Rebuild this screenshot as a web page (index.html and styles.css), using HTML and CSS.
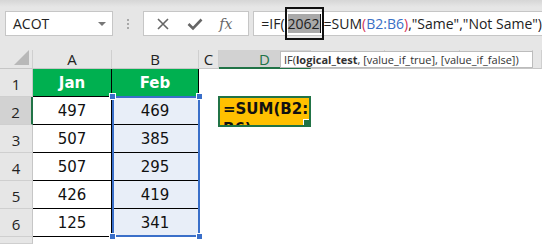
FILE: index.html
```html
<!DOCTYPE html>
<html lang="en">
<head>
    <meta charset="UTF-8">
    <title>IF formula</title>
    <link rel="stylesheet" href="styles.css">
</head>
<body>

<div class="toolbar">
    <div class="name-box">
        <span>ACOT</span>
        <span class="caret"></span>
    </div>
    <div class="grip"><i></i><i></i><i></i></div>
    <div class="fx-box">
        <svg width="14" height="14" viewBox="0 0 14 14"><path d="M2 2 L12 12 M12 2 L2 12" stroke="#666" stroke-width="1.6" fill="none"/></svg>
        <svg width="16" height="14" viewBox="0 0 16 14"><path d="M1.5 7 L6 11.5 L14.5 2.5" stroke="#666" stroke-width="2.6" fill="none"/></svg>
        <span class="fx">fx</span>
    </div>
    <div class="formula-box">
        =IF(<span class="arg"><span class="arg-hl">2062</span></span>=SUM<span class="paren">(</span><span class="ref">B2:B6</span><span class="paren">)</span>,"Same","Not Same")
    </div>
</div>

<div class="sheet">
    <div class="grid">
        <div class="hd corner"><span class="tri"></span></div>
        <div class="hd">A</div>
        <div class="hd">B</div>
        <div class="hd">C</div>
        <div class="hd active-col">D</div>
        <div class="hd"></div>
        <div class="hd"></div>
        <div class="hd"></div>
        <div class="hd"></div>

        <div class="rh">1</div>
        <div class="c tbl head">Jan</div>
        <div class="c tbl head">Feb</div>
        <div class="c"></div><div class="c"></div><div class="c"></div><div class="c"></div><div class="c"></div><div class="c"></div>

        <div class="rh active-row">2</div>
        <div class="c tbl">497</div>
        <div class="c tbl sel">469</div>
        <div class="c"></div><div class="c"></div><div class="c"></div><div class="c"></div><div class="c"></div><div class="c"></div>

        <div class="rh">3</div>
        <div class="c tbl">507</div>
        <div class="c tbl sel">385</div>
        <div class="c"></div><div class="c"></div><div class="c"></div><div class="c"></div><div class="c"></div><div class="c"></div>

        <div class="rh">4</div>
        <div class="c tbl">507</div>
        <div class="c tbl sel">295</div>
        <div class="c"></div><div class="c"></div><div class="c"></div><div class="c"></div><div class="c"></div><div class="c"></div>

        <div class="rh">5</div>
        <div class="c tbl">426</div>
        <div class="c tbl sel">419</div>
        <div class="c"></div><div class="c"></div><div class="c"></div><div class="c"></div><div class="c"></div><div class="c"></div>

        <div class="rh">6</div>
        <div class="c tbl">125</div>
        <div class="c tbl sel">341</div>
        <div class="c"></div><div class="c"></div><div class="c"></div><div class="c"></div><div class="c"></div><div class="c"></div>

        <div class="rh"></div>
        <div class="c"></div><div class="c"></div><div class="c"></div><div class="c"></div><div class="c"></div><div class="c"></div><div class="c"></div><div class="c"></div>
    </div>

    <!-- selection B2:B6 -->
    <div class="selection">
        <span class="handle tl"></span>
        <span class="handle tr"></span>
        <span class="handle bl"></span>
        <span class="handle br"></span>
    </div>

    <!-- in-cell editor on D2 -->
    <div class="editor">
        <div class="editor-text">=SUM(B2:<br>B6)</div>
        <span class="fill-handle"></span>
    </div>

    <div class="tooltip">IF(<b>logical_test</b>, [value_if_true], [value_if_false])</div>
</div>

</body>
</html>
```

FILE: styles.css
```css
body {
    margin: 0;
    padding: 0;
    width: 542px;
    height: 244px;
    overflow: hidden;
    background-color: #fff;
    font-family: "Open Sans", "Liberation Sans", sans-serif;
    color: #222;
}
.toolbar {
    height: 50px;
    background: linear-gradient(#d6d6d6, #e6e6e6 7px);
    display: flex;
    align-items: flex-start;
    padding-top: 11px;
    box-sizing: border-box;
}
.name-box {
    margin-left: 5px;
    width: 111px;
    height: 25px;
    box-sizing: border-box;
    background-color: #fff;
    border: 1px solid #c6c6c6;
    display: flex;
    align-items: center;
    justify-content: space-between;
    padding: 0 6px 0 7px;
    font-size: 14px;
    color: #222;
}
.caret {
    width: 0;
    height: 0;
    border-left: 4px solid transparent;
    border-right: 4px solid transparent;
    border-top: 4px solid #777;
}
.grip {
    width: 31px;
    height: 25px;
    display: flex;
    flex-direction: column;
    align-items: center;
    justify-content: center;
    gap: 2px;
}
.grip i {
    width: 2px;
    height: 2px;
    background-color: #a8a8a8;
}
.fx-box {
    width: 109px;
    height: 25px;
    box-sizing: border-box;
    background-color: #fff;
    border: 1px solid #c6c6c6;
    display: flex;
    align-items: center;
    justify-content: space-between;
    padding: 0 16px 0 12px;
}
.fx {
    font-family: "DejaVu Serif", "Liberation Serif", serif;
    font-style: italic;
    font-size: 14px;
    color: #666;
}
.formula-box {
    margin-left: 4px;
    flex: 1;
    height: 25px;
    box-sizing: border-box;
    background-color: #fff;
    border: 1px solid #c6c6c6;
    border-right: none;
    padding-left: 7px;
    font-size: 14px;
    line-height: 23px;
    white-space: nowrap;
    color: #222;
}
.arg {
    border: 2px solid #111;
    padding: 5px 1px 5px 1px;
}
.arg-hl {
    background-color: #a9a9a9;
    border-right: 1px solid #111;
}
.paren {
    color: #d2335a;
}
.ref {
    color: #3a6fc6;
}
.sheet {
    position: relative;
    height: 194px;
    overflow: hidden;
}
.grid {
    display: grid;
    grid-template-columns: 33px 79px 87px 20px 92px 74px 75px 73px 9px;
    grid-template-rows: 19px repeat(6, 28px) 7px;
}
.hd {
    background-color: #e6e6e6;
    border-right: 1px solid #cfcfcf;
    border-bottom: 1px solid #c6c6c6;
    font-size: 15px;
    line-height: 18px;
    text-align: center;
    color: #222;
}
.corner {
    position: relative;
}
.tri {
    position: absolute;
    right: 3px;
    bottom: 3px;
    width: 0;
    height: 0;
    border-left: 15px solid transparent;
    border-bottom: 15px solid #b8b8b8;
}
.active-col {
    background-color: #d2d2d2;
    border-bottom: 2px solid #217346;
    color: #217346;
    line-height: 19px;
}
.rh {
    background-color: #e6e6e6;
    border-right: 1px solid #c6c6c6;
    border-bottom: 1px solid #cfcfcf;
    font-size: 15px;
    display: flex;
    align-items: flex-end;
    justify-content: center;
    padding-bottom: 2px;
    box-sizing: border-box;
}
.active-row {
    background-color: #d2d2d2;
    border-right: 2px solid #217346;
}
.c {
    font-family: "DejaVu Sans", Verdana, sans-serif;
    font-size: 15px;
    display: flex;
    align-items: center;
    justify-content: center;
    color: #111;
}
.tbl {
    border-right: 1px solid #000;
    border-bottom: 1px solid #000;
}
.head {
    background-color: #00b050;
    color: #fff;
    font-weight: bold;
}
.sel {
    background-color: #e8eef8;
}
.selection {
    position: absolute;
    left: 112px;
    top: 46px;
    width: 88px;
    height: 141px;
    box-sizing: border-box;
    border: 2px solid #3a6fc9;
}
.handle {
    position: absolute;
    width: 5px;
    height: 5px;
    background-color: #3a6fc9;
    border: 1px solid #fff;
}
.handle.tl { left: -5px; top: -5px; }
.handle.tr { right: -5px; top: -5px; }
.handle.bl { left: -5px; bottom: -5px; }
.handle.br { right: -5px; bottom: -5px; }
.editor {
    position: absolute;
    left: 218px;
    top: 46px;
    width: 93px;
    height: 31px;
    box-sizing: border-box;
    background-color: #ffc000;
    border: 2px solid #217346;
    overflow: hidden;
}
.editor-text {
    font-family: "DejaVu Sans", Verdana, sans-serif;
    font-weight: bold;
    font-size: 15px;
    line-height: 20px;
    padding: 1px 0 0 3px;
    color: #111;
}
.fill-handle {
    position: absolute;
    right: -1px;
    bottom: -1px;
    width: 5px;
    height: 5px;
    background-color: #217346;
    border: 1px solid #fff;
}
.tooltip {
    position: absolute;
    left: 280px;
    top: 1px;
    width: 253px;
    height: 17px;
    box-sizing: border-box;
    background-color: #fff;
    border: 1px solid #bcbcbc;
    font-size: 11px;
    line-height: 15px;
    padding-left: 3px;
    white-space: nowrap;
    color: #333;
}
```
